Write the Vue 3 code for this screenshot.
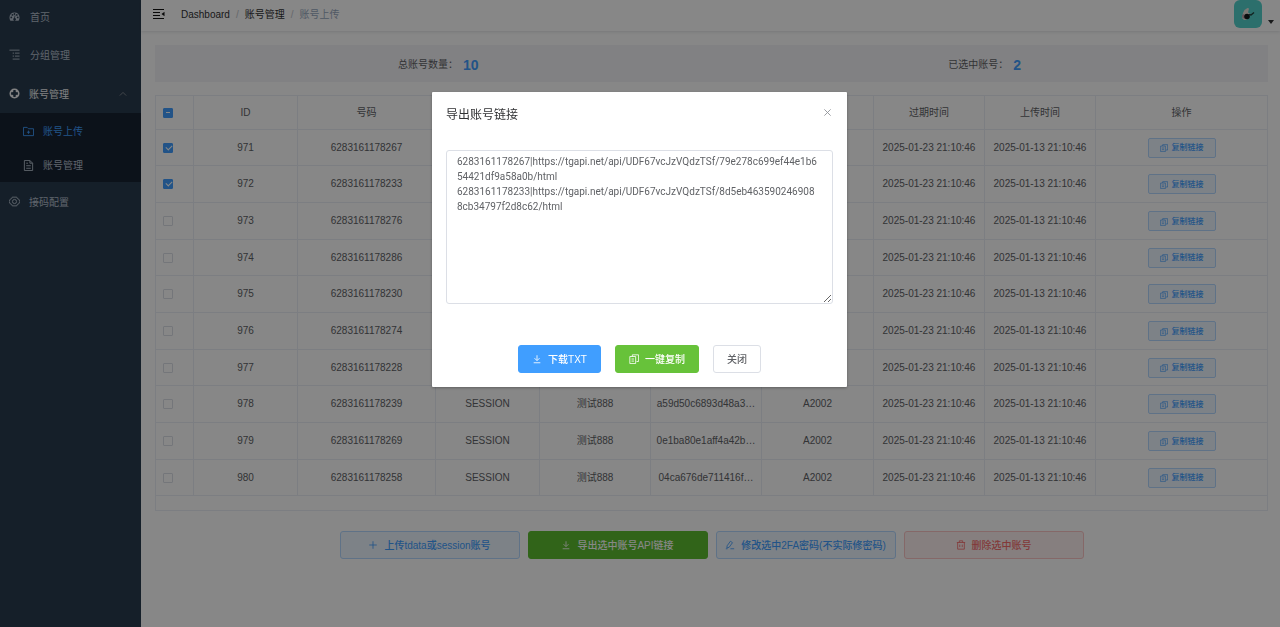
<script setup>
import { ref, computed } from 'vue'

const phones = ['6283161178267', '6283161178233', '6283161178276', '6283161178286', '6283161178230', '6283161178274', '6283161178228', '6283161178239', '6283161178269', '6283161178258']
const tokens = ['79e278c699ef44e1b6…', '8d5eb4635902469088…', '3be41c07d25f4e91a8…', 'c7718fe2a90b4d3c9e…', '5fa02b9de8134c67b1…', 'e20d91ab3c5f4872a6…', '91c3de70fa284b05bd…', 'a59d50c6893d48a3…', '0e1ba80e1aff4a42b…', '04ca676de711416f…']
const rows = ref(phones.map((phone, i) => ({ id: 971 + i, phone, token: tokens[i], checked: i < 2 })))
const selected = computed(() => rows.value.filter((r) => r.checked).length)
const partial = computed(() => selected.value > 0 && selected.value < rows.value.length)
const open = ref(true)
const links = ref(
  '6283161178267|https://tgapi.net/api/UDF67vcJzVQdzTSf/79e278c699ef44e1b654421df9a58a0b/html\n' +
  '6283161178233|https://tgapi.net/api/UDF67vcJzVQdzTSf/8d5eb4635902469088cb34797f2d8c62/html'
)
function toggleAll(e) {
  rows.value.forEach((r) => { r.checked = e.target.checked })
}
</script>

<template>
  <div class="app">
    <aside class="sidebar">
      <nav>
        <a href="#" class="item wide">
          <svg class="ico" viewBox="0 0 24 24"><path fill="currentColor" fill-rule="evenodd" d="M12 3A11 11 0 0 0 1 14c0 2.600.8 4.800 2 7h18c1.200-2.200 2-4.400 2-7A11 11 0 0 0 12 3zM5 16a2 2 0 1 1 0-4 2 2 0 0 1 0 4zm2.500-5.500a2 2 0 1 1 0-4 2 2 0 0 1 0 4zM12 8.500a2 2 0 1 1 0-4 2 2 0 0 1 0 4zm2.700 7.700a3 3 0 1 1-3.500-1.200l1.500-6 1.500.4-1.300 5.900c.8.100 1.400.400 1.800.9zM17 10.500a2 2 0 1 1 0-4 2 2 0 0 1 0 4zm2 5.500a2 2 0 1 1 0-4 2 2 0 0 1 0 4z"/></svg>
          <span>首页</span>
        </a>
        <a href="#" class="item wide">
          <svg class="ico" viewBox="0 0 24 24" fill="none" stroke="currentColor" stroke-width="2"><path d="M1 2.500h22M8 9h3M13 9h10M8 15.500h3M13 15.500h10M8 22h15"/></svg>
          <span>分组管理</span>
        </a>
        <a href="#" class="item open">
          <svg class="ico" viewBox="0 0 24 24"><path fill="currentColor" fill-rule="evenodd" d="M12 1a11 11 0 1 0 0 22 11 11 0 0 0 0-22zM9.500 4.500h5v3l2 2h3v5h-3l-2 2v3h-5v-3l-2-2h-3v-5h3l2-2z"/></svg>
          <span>账号管理</span>
          <svg class="caret" viewBox="0 0 10 10" fill="none" stroke="currentColor"><path d="M1 7l4-4 4 4"/></svg>
        </a>
        <div class="sub">
          <a href="#" class="subitem active">
            <svg class="ico" viewBox="0 0 24 24" fill="none" stroke="currentColor" stroke-width="2"><path d="M1 3h8l3 3h11v15H1zM12 10v7M8.500 13.500h7"/></svg>
            <span>账号上传</span>
          </a>
          <a href="#" class="subitem">
            <svg class="ico" viewBox="0 0 24 24" fill="none" stroke="currentColor" stroke-width="2"><path d="M3 1h12l6 6v16H3zM15 1v6h6M7 12.500h10M7 18h10M7 7h4"/></svg>
            <span>账号管理</span>
          </a>
        </div>
        <a href="#" class="item">
          <svg class="ico" viewBox="0 0 24 24" fill="none" stroke="currentColor" stroke-width="2"><path d="M7 2.500h10l1 3 3.500 1.500 2 5-2 5-3.500 1.500-1 3H7l-1-3L2.500 17l-2-5 2-5L6 5.500z"/><circle cx="12" cy="12" r="4.500"/></svg>
          <span>接码配置</span>
        </a>
      </nav>
    </aside>

    <div class="main">
      <header class="top">
        <button class="fold" aria-label="收起菜单">
          <svg viewBox="0 0 12 12" fill="none" stroke="currentColor"><path d="M0 1.500h11M0 4.500h7M0 7.500h7M0 10.500h11"/><path fill="currentColor" stroke="none" d="M11.500 3.800v4.400L8.500 6z"/></svg>
        </button>
        <nav class="crumbs" aria-label="路径">
          <a href="#">Dashboard</a><i>/</i><a href="#">账号管理</a><i>/</i><span>账号上传</span>
        </nav>
        <button class="user" aria-label="用户菜单">
          <svg class="avatar" viewBox="0 0 28 28"><rect width="28" height="28" rx="6" fill="#54d2cc"/><path fill="#e9e2dc" d="M10.500 10l3-2 1.500.5-1 4 2 1-3 6-3 .5-2-2 1-5z"/><path fill="#b8a0a8" d="M8 15l2-1 1.500 5-3-1z"/><circle cx="13" cy="16.500" r="2.800" fill="#14191c"/><path d="M15 14.500l2 .5 3-2.500" fill="none" stroke="#22443f" stroke-width="1.500"/></svg>
          <svg class="down" viewBox="0 0 6 4"><path fill="currentColor" d="M0 0h6L3 4z"/></svg>
        </button>
      </header>

      <main class="content">
        <section class="stats">
          <div>总账号数量：<b>{{ rows.length }}</b></div>
          <div>已选中账号：<b>{{ selected }}</b></div>
        </section>

        <div class="tablebox">
          <table>
            <colgroup>
              <col class="c-check"><col class="c-id"><col class="c-phone"><col class="c-type"><col class="c-mid"><col class="c-mid"><col class="c-pass"><col class="c-mid"><col class="c-mid"><col>
            </colgroup>
            <thead>
              <tr>
                <th><input type="checkbox" aria-label="全选" :indeterminate.prop="partial" @change="toggleAll"></th>
                <th>ID</th><th>号码</th><th aria-label="类型"></th><th aria-label="分组"></th><th aria-label="密钥"></th><th aria-label="2FA"></th><th>过期时间</th><th>上传时间</th><th>操作</th>
              </tr>
            </thead>
            <tbody>
              <tr v-for="r in rows" :key="r.id">
                <td><input v-model="r.checked" type="checkbox" :aria-label="'选择 ' + r.id"></td>
                <td>{{ r.id }}</td>
                <td>{{ r.phone }}</td>
                <td>SESSION</td>
                <td>测试888</td>
                <td>{{ r.token }}</td>
                <td>A2002</td>
                <td>2025-01-23 21:10:46</td>
                <td>2025-01-13 21:10:46</td>
                <td>
                  <button class="mini">
                    <svg viewBox="0 0 12 12" fill="none" stroke="currentColor"><path d="M4 3V1h7.500v8H9M1 3h7v8.500H1zM3 6h3M3 8.500h3"/></svg>复制链接
                  </button>
                </td>
              </tr>
            </tbody>
          </table>
        </div>

        <div class="actions">
          <button class="btn blue"><svg viewBox="0 0 12 12" fill="none" stroke="currentColor"><path d="M6 1.500v9M1.500 6h9"/></svg><span>上传tdata或session账号</span></button>
          <button class="btn green"><svg viewBox="0 0 12 12" fill="none" stroke="currentColor"><path d="M6 1.500v6M3 5l3 3 3-3M2 10.500h8"/></svg><span>导出选中账号API链接</span></button>
          <button class="btn blue"><svg viewBox="0 0 12 12" fill="none" stroke="currentColor"><path d="M2.500 7l4-5.500 2.500 1.700-4 5.500-2.700.9zM6.500 10.500h4.500M1 10.500h2"/></svg><span>修改选中2FA密码(不实际修密码)</span></button>
          <button class="btn red"><svg viewBox="0 0 12 12" fill="none" stroke="currentColor"><path d="M1 3h10M4 3V1h4v2M2 3v8h8V3M4.500 5.500v3M7.500 5.500v3"/></svg><span>删除选中账号</span></button>
        </div>
      </main>
    </div>

    <div v-if="open" class="mask">
      <section class="dialog" role="dialog" aria-modal="true" aria-labelledby="dlg-title">
        <header>
          <h2 id="dlg-title">导出账号链接</h2>
          <button class="close" aria-label="关闭对话框" @click="open = false">
            <svg viewBox="0 0 10 10" fill="none" stroke="currentColor"><path d="M1.500 1.500l7 7M8.500 1.500l-7 7"/></svg>
          </button>
        </header>
        <textarea v-model="links" aria-label="账号链接" spellcheck="false"></textarea>
        <footer>
          <button class="btn primary"><svg viewBox="0 0 12 12" fill="none" stroke="currentColor"><path d="M6 1.500v6M3 5l3 3 3-3M2 10.500h8"/></svg><span>下载TXT</span></button>
          <button class="btn success"><svg viewBox="0 0 12 12" fill="none" stroke="currentColor"><path d="M4 3V1h7.500v8H9M1 3h7v8.500H1zM3 6h3M3 8.500h3"/></svg><span>一键复制</span></button>
          <button class="btn plain" @click="open = false"><span>关闭</span></button>
        </footer>
      </section>
    </div>
  </div>
</template>

<style>
body { margin: 0; background: #fff; }
</style>

<style scoped>
* { box-sizing: border-box; }
.app {
  display: flex;
  min-height: 100vh;
  font: 10px/14px "Liberation Sans", "Noto Sans CJK SC", sans-serif;
  color: #606266;
}
button, input, textarea { font: inherit; margin: 0; }
button { cursor: pointer; }
a { color: inherit; text-decoration: none; }
svg { display: block; flex: none; }

.sidebar { flex: none; width: 141px; background: #293c4f; color: #b4bfcc; }
.sidebar span { padding-top: 2px; }
.item { display: flex; align-items: center; height: 39px; padding: 0 14px 0 9px; }
.item:first-child { height: 35px; padding-bottom: 2px; }
.ico { width: 11px; height: 11px; margin-right: 9px; }
.wide .ico { margin-right: 10px; }
.item.open { color: #f4f4f5; }
.caret { width: 8px; height: 8px; margin-left: auto; color: #909399; }
.sub { padding-top: 1px; background: #172231; }
.subitem { display: flex; align-items: center; height: 34px; padding-left: 23px; }
.subitem.active { color: #409eff; }

.main { flex: 1; min-width: 0; }
.top { display: flex; align-items: center; height: 31px; padding: 0 6px 3px 12px; box-shadow: 0 1px 3px rgba(0, 21, 41, .12); }
.fold { padding: 0; border: 0; background: none; color: #111; }
.fold svg { width: 12px; height: 12px; }
.crumbs { display: flex; padding-top: 1px; margin-left: 16px; color: #303133; }
.crumbs i { margin: 0 6px; color: #c0c4cc; font-style: normal; }
.crumbs span { color: #97a8be; }
.user { display: flex; align-items: flex-end; gap: 6px; margin-left: auto; padding: 0; border: 0; background: none; color: #303133; }
.avatar { width: 28px; height: 28px; }
.down { width: 6px; height: 4px; margin-bottom: 4px; }

.content { padding: 14px 12px 14px 14px; }
.stats { display: grid; grid-template-columns: 1fr 1fr; height: 37px; padding: 2px 10px 0; background: #f4f4f7; }
.stats div { display: flex; align-items: center; justify-content: center; }
.stats b { margin-left: 5px; font-size: 14px; color: #409eff; }

.tablebox { margin-top: 13px; padding-bottom: 14px; border: 1px solid #ebeef5; }
table { width: 100%; border-collapse: separate; border-spacing: 0; table-layout: fixed; }
.c-check { width: 38px; }
.c-id { width: 104px; }
.c-phone { width: 138px; }
.c-type { width: 104px; }
.c-mid { width: 111px; }
.c-pass { width: 112px; }
th, td { padding: 0; border-right: 1px solid #ebeef5; border-bottom: 1px solid #ebeef5; text-align: center; font-weight: 400; white-space: nowrap; overflow: hidden; }
th:last-child, td:last-child { border-right: 0; }
th { height: 34px; padding-top: 1px; }
td { height: 37px; }
tr:nth-child(3n + 1) td { height: 36px; }
th:first-child, td:first-child { padding-left: 7px; text-align: left; }
input[type="checkbox"] { appearance: none; display: block; width: 10px; height: 10px; border: 1px solid #dcdfe6; border-radius: 1px; background: #fff; position: relative; }
input[type="checkbox"]:checked, input[type="checkbox"]:indeterminate { background: #409eff; border-color: #409eff; }
input[type="checkbox"]:checked::after { content: ""; position: absolute; left: 3px; top: 0; width: 3px; height: 5px; border: solid #fff; border-width: 0 1px 1px 0; transform: rotate(45deg); }
input[type="checkbox"]:indeterminate::after { content: ""; position: absolute; left: 2px; top: 3px; width: 4px; height: 1px; background: #fff; }
.mini { display: inline-flex; align-items: center; gap: 4px; height: 20px; padding: 1px 11px 0; border: 1px solid #b3d8ff; border-radius: 2px; background: #ecf5ff; color: #409eff; font-size: 8px; font-weight: 500; line-height: 10px; vertical-align: middle; }
.mini svg { width: 8px; height: 8px; }

.actions { display: flex; justify-content: center; gap: 8px; margin-top: 20px; }
.btn { display: inline-flex; align-items: center; justify-content: center; gap: 6px; height: 28px; padding: 0 13px; border: 1px solid; border-radius: 3px; font-weight: 500; white-space: nowrap; }
.btn svg { width: 10px; height: 10px; }
.btn span { padding-top: 2px; }
.actions .btn { min-width: 180px; padding: 0 8px; }
.blue { background: #ecf5ff; border-color: #b3d8ff; color: #409eff; }
.green { background: #5dbd30; border-color: #5dbd30; color: #fff; }
.red { background: #fef0f0; border-color: #fbc4c4; color: #f56c6c; }

.mask { position: fixed; inset: 0; padding-right: 1px; background: rgba(0, 0, 0, .47); }
.dialog { width: 415px; margin: 92px auto 0; padding: 14px; background: #fff; border-radius: 1px; box-shadow: 0 1px 3px rgba(0, 0, 0, .3); }
.dialog header { display: flex; align-items: flex-start; justify-content: space-between; height: 44px; }
h2 { margin: 0; font-size: 12px; line-height: 18px; font-weight: 400; color: #303133; }
.close { padding: 2px 1px; border: 0; background: none; color: #909399; }
.close svg { width: 9px; height: 9px; }
textarea { display: block; width: 100%; height: 154px; padding: 3px 12px 3px 10px; border: 1px solid #dcdfe6; border-radius: 3px; font-family: Roboto, "Noto Sans CJK SC", sans-serif; line-height: 15px; color: #606266; word-break: break-all; resize: vertical; }
footer { display: flex; justify-content: center; gap: 14px; margin-top: 41px; }
.primary { background: #409eff; border-color: #409eff; color: #fff; }
.success { background: #67c23a; border-color: #67c23a; color: #fff; }
.plain { background: #fff; border-color: #dcdfe6; color: #606266; }
</style>
